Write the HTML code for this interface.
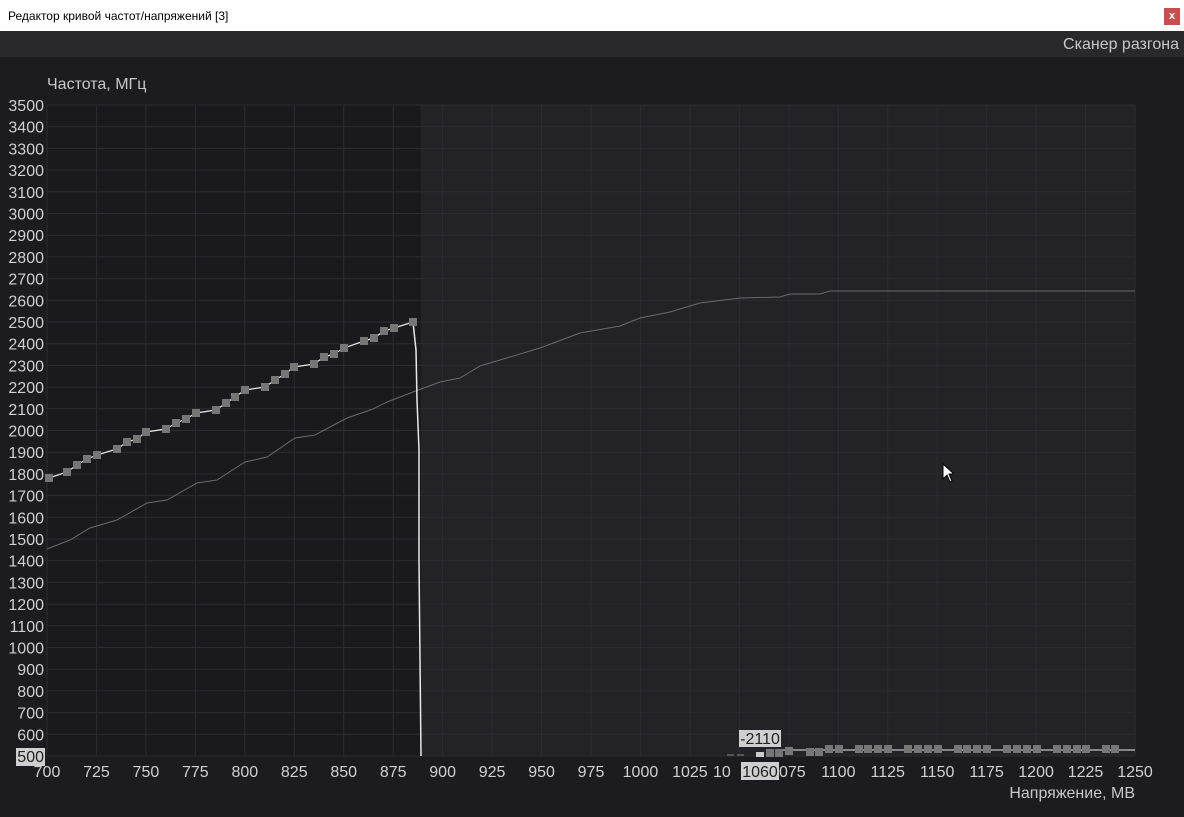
<!DOCTYPE html>
<html><head><meta charset="utf-8"><style>
body{margin:0;width:1184px;height:817px;background:#1c1b1f;overflow:hidden;font-family:"Liberation Sans",sans-serif;position:relative}
.tb{position:absolute;left:0;top:0;width:1184px;height:31px;background:#fff;}
.tb span{position:absolute;left:8px;top:9px;font-size:12px;color:#000}
.x{position:absolute;left:1164px;top:8px;width:16px;height:17px;background:#c94f4f;color:#fff;font-size:11px;font-weight:bold;text-align:center;line-height:16px}
.bar{position:absolute;left:0;top:31px;width:1184px;height:26px;background:#29282d}
.bar span{position:absolute;right:5px;top:5px;font-size:16px;color:#c8c8c8}
</style></head><body>
<div class="tb"><span>Редактор кривой частот/напряжений [3]</span><div class="x">x</div></div>
<div class="bar"><span>Сканер разгона</span></div>
<svg width="1184" height="817" style="position:absolute;left:0;top:0" font-family="Liberation Sans, sans-serif">
<rect x="47" y="105" width="374" height="651" fill="#1a191d"/>
<rect x="421" y="105" width="714" height="651" fill="#232227"/>
<rect x="16" y="748" width="29" height="18" fill="#cfcfcf"/>
<g stroke="#2d2c32" stroke-width="1" id="g"></g>
<g id="lbl" fill="#d0d0d0" font-size="16"></g>
<text x="47" y="89" fill="#c8c8c8" font-size="16">Частота, МГц</text>
<text x="1135" y="798" fill="#c8c8c8" font-size="16" text-anchor="end">Напряжение, МВ</text>
<polyline fill="none" stroke="#6a6a6e" stroke-width="1" points="47,549 70,540 90,528 117,520 147,503 167,500 197,483 217,480 245,462 267,457 295,438 315,435 330,427 347,418 373,409 387,402 413,392 440,382 460,378 480,366 500,360 540,348 580,333 620,326 640,318 670,312 700,303 740,298 780,297 790,294 820,294 830,291 1135,291"/>
<polyline fill="none" stroke="#e8e8e8" stroke-width="1.2" id="mline" points=""/>
<polyline fill="none" stroke="#e8e8e8" stroke-width="1.5" points="413,322 416,350 417,400 419,450 419,560 420,660 421,756"/>
<line x1="775" y1="750" x2="1135" y2="750" stroke="#e8e8e8" stroke-width="1"/>
<g id="sq" fill="#767676"></g>
<line x1="727" y1="755" x2="734" y2="755" stroke="#555" stroke-width="2"/>
<line x1="737" y1="755" x2="744" y2="755" stroke="#555" stroke-width="2"/>
<rect x="756" y="752" width="8" height="5" fill="#ccc"/>
<rect x="739" y="730" width="42" height="17" fill="#cfcfcf"/>
<text x="760" y="744" fill="#222" font-size="16" text-anchor="middle">-2110</text>
<rect x="741" y="762" width="38" height="18" fill="#cfcfcf"/>
<text x="760" y="777" fill="#222" font-size="16" text-anchor="middle">1060</text>
</svg>
<script>
var ns="http://www.w3.org/2000/svg",g=document.getElementById('g'),l=document.getElementById('lbl');
function el(p,t,a,tx){var e=document.createElementNS(ns,t);for(var k in a)e.setAttribute(k,a[k]);if(tx)e.textContent=tx;p.appendChild(e);}
for(var i=0;i<=30;i++){var y=105+i*651/30;el(g,'line',{x1:47,x2:1135,y1:y,y2:y});el(l,'text',{x:44,y:y+6,'text-anchor':'end',fill:i==30?'#222':'#d0d0d0'},String(3500-i*100));}
for(var j=0;j<=22;j++){var x=47+j*1088/22;el(g,'line',{x1:x,x2:x,y1:105,y2:756});var v=700+j*25;if(v==1050||v==1075)continue;el(l,'text',{x:x,y:777,'text-anchor':'middle'},String(v));}
el(l,'text',{x:713,y:777,'text-anchor':'start'},'10');el(l,'text',{x:779,y:777,'text-anchor':'start'},'075');
var p=[[49,478],[67,472],[77,465],[87,459],[97,455],[117,449],[127,442],[137,439],[146,432],[166,429],[176,423],[186,419],[196,413],[216,410],[226,403],[235,397],[245,390],[265,387],[275,380],[285,374],[294,367],[314,364],[324,357],[334,354],[344,348],[364,341],[374,338],[384,331],[394,328],[413,322]];
document.getElementById('mline').setAttribute('points',p.map(function(a){return a.join(',')}).join(' '));
var s=document.getElementById('sq');p.forEach(function(a){el(s,'rect',{x:a[0]-4,y:a[1]-4,width:8,height:8});});
[[770,753],[779,753],[789,751],[810,752],[819,752],[829,749],[839,749]].concat([859,868,878,888,908,918,928,938,958,967,977,987,1007,1017,1027,1037,1057,1067,1077,1086,1106,1115].map(function(x){return [x,749]})).forEach(function(a){el(s,'rect',{x:a[0]-4,y:a[1]-4,width:8,height:8});});
</script>
<svg style="position:absolute;left:942px;top:463px" width="12" height="20"><path d="M1 1 L1 16 L5 12 L8 19 L10 18 L7 11 L12 11 Z" fill="#fff" stroke="#000" stroke-width="1"/></svg>
</body></html>
